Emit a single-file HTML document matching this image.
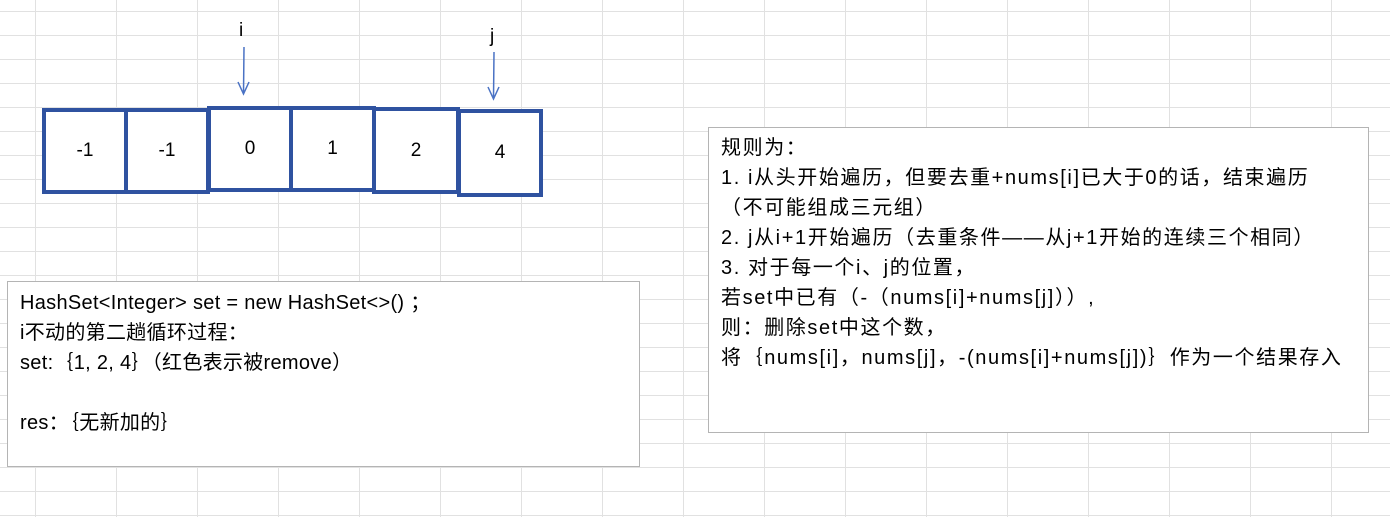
<!DOCTYPE html>
<html><head><meta charset="utf-8"><style>
html,body{margin:0;padding:0;}
body{width:1390px;height:517px;position:relative;overflow:hidden;background:#fff;
background-image:linear-gradient(to right,#e1e1e1 1px,transparent 1px),linear-gradient(to bottom,#e1e1e1 1px,transparent 1px);
background-size:81px 24px;background-position:35px 11px;
font-family:"Liberation Sans","Noto Sans CJK SC",sans-serif;color:#000;}
.c{position:absolute;border:4px solid #2f52a0;background:#fff;box-sizing:border-box;display:flex;align-items:center;justify-content:center;font-size:19px;}
.box{position:absolute;border:1px solid #b4b4b4;background:#fff;box-sizing:border-box;font-size:20px;line-height:30px;white-space:nowrap;}
.lbl{position:absolute;font-size:19px;}
</style></head><body>
<div class="c" style="left:42px;top:108px;width:86px;height:86px;">-1</div>
<div class="c" style="left:124px;top:108px;width:86px;height:86px;">-1</div>
<div class="c" style="left:207px;top:106px;width:86px;height:86px;">0</div>
<div class="c" style="left:289px;top:106px;width:87px;height:86px;">1</div>
<div class="c" style="left:372px;top:107px;width:88px;height:87px;">2</div>
<div class="c" style="left:457px;top:109px;width:86px;height:88px;">4</div>
<div class="lbl" style="left:239px;top:20px;">i</div>
<div class="lbl" style="left:490px;top:26px;">j</div>
<svg style="position:absolute;left:0;top:0" width="560" height="110">
<g stroke="#4a72c4" stroke-width="1.5" fill="none">
<path d="M244 47 L243.5 94 M238 82 L243.5 94 L249 82"/>
<path d="M494 52 L493.5 99 M488 87 L493.5 99 L499 87"/>
</g></svg>
<div class="box" style="left:7px;top:281px;width:633px;height:186px;padding:6px 0 0 12px;letter-spacing:0.3px;">
HashSet&lt;Integer&gt; set = new HashSet&lt;&gt;() ；<br>i不动的第二趟循环过程：<br>set:｛1, 2, 4｝（红色表示被remove）<br><br>res：｛无新加的｝
</div>
<div class="box" style="left:708px;top:127px;width:661px;height:306px;padding:5px 0 0 12px;letter-spacing:1.6px;">
规则为：<br>1. i从头开始遍历，但要去重+nums[i]已大于0的话，结束遍历<br>（不可能组成三元组）<br>2. j从i+1开始遍历（去重条件——从j+1开始的连续三个相同）<br>3. 对于每一个i、j的位置，<br>若set中已有（-（nums[i]+nums[j]））,<br>则：删除set中这个数，<br>将｛nums[i]，nums[j]，-(nums[i]+nums[j])｝作为一个结果存入
</div>
</body></html>
